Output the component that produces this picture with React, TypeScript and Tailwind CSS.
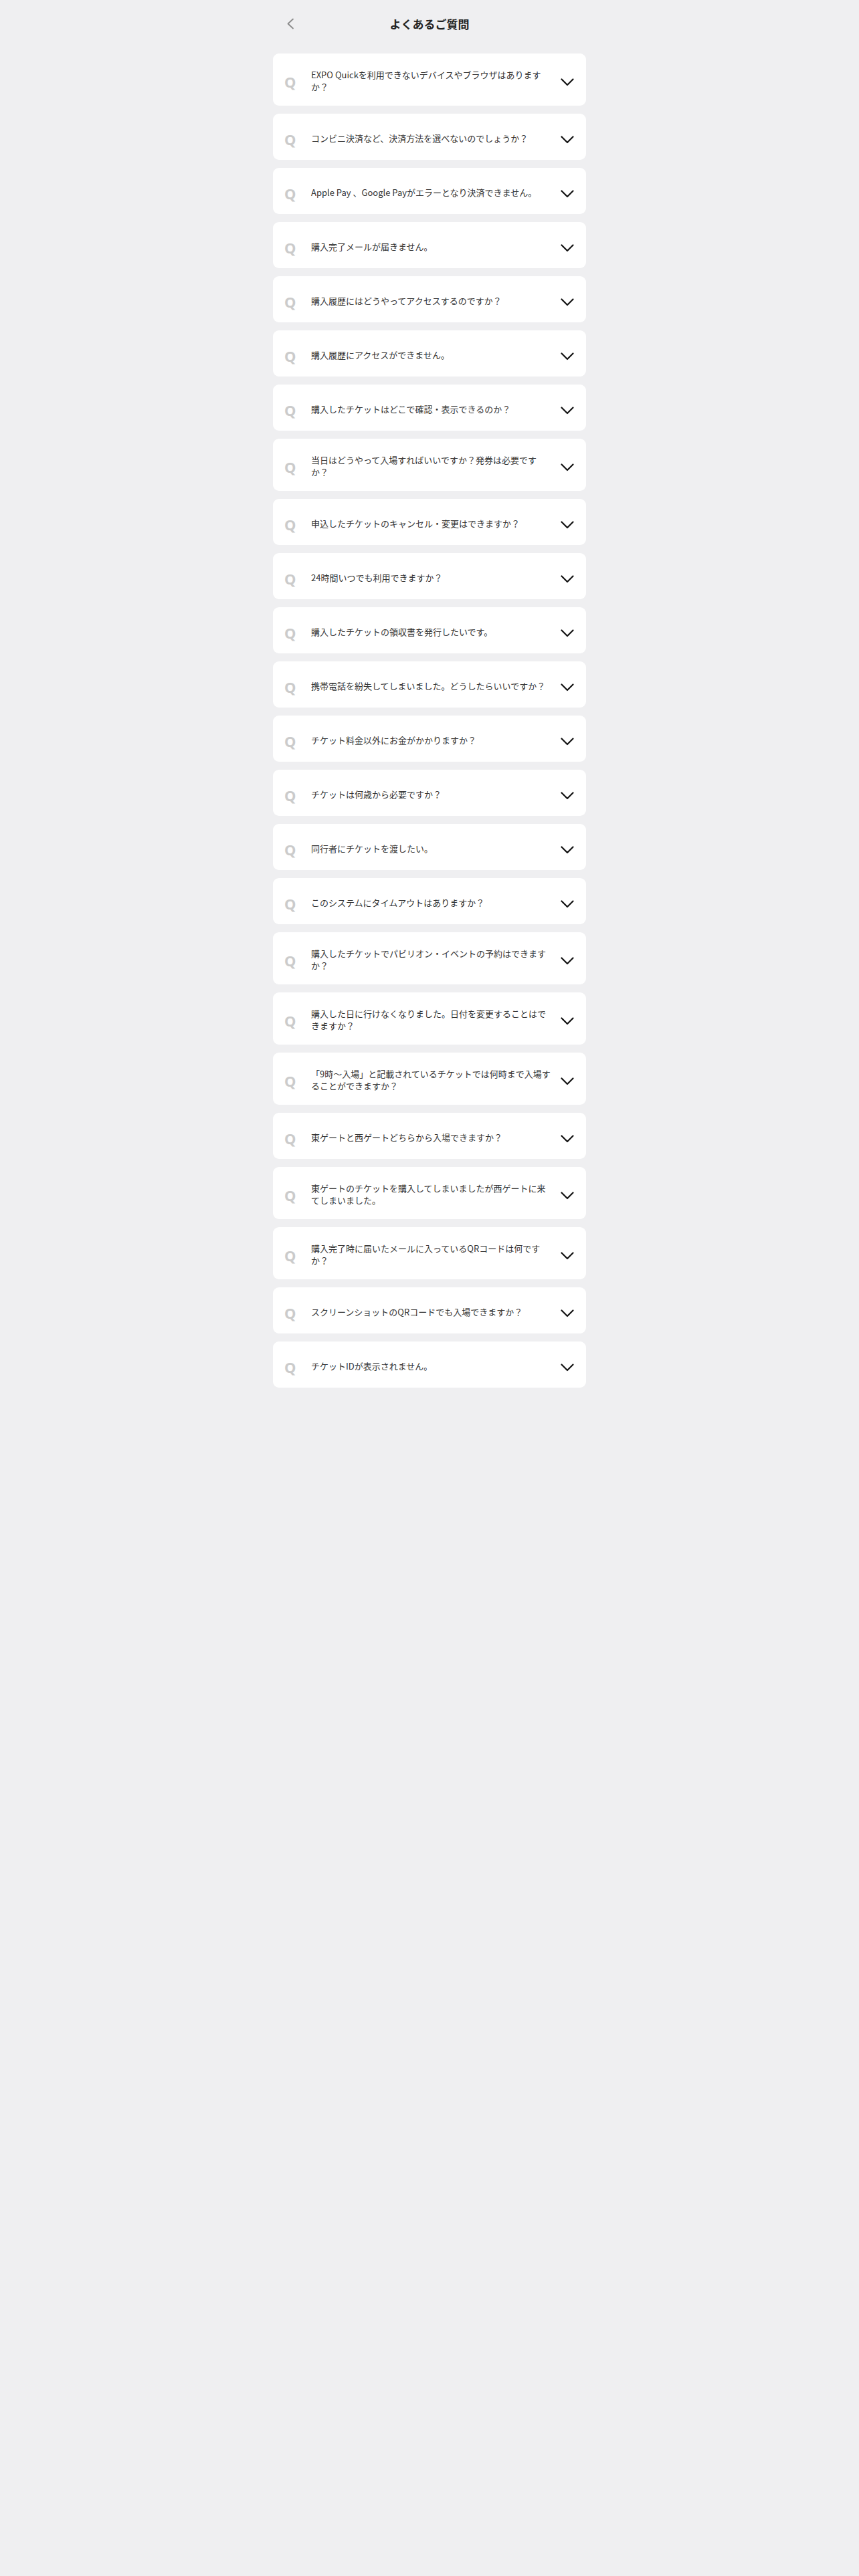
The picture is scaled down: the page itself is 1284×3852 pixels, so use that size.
const faqs = [
    "EXPO Quickを利用できないデバイスやブラウザはありますか？",
    "コンビニ決済など、決済方法を選べないのでしょうか？",
    "Apple Pay 、Google Payがエラーとなり決済できません。",
    "購入完了メールが届きません。",
    "購入履歴にはどうやってアクセスするのですか？",
    "購入履歴にアクセスができません。",
    "購入したチケットはどこで確認・表示できるのか？",
    "当日はどうやって入場すればいいですか？発券は必要ですか？",
    "申込したチケットのキャンセル・変更はできますか？",
    "24時間いつでも利用できますか？",
    "購入したチケットの領収書を発行したいです。",
    "携帯電話を紛失してしまいました。どうしたらいいですか？",
    "チケット料金以外にお金がかかりますか？",
    "チケットは何歳から必要ですか？",
    "同行者にチケットを渡したい。",
    "このシステムにタイムアウトはありますか？",
    "購入したチケットでパビリオン・イベントの予約はできますか？",
    "購入した日に行けなくなりました。日付を変更することはできますか？",
    "「9時〜入場」と記載されているチケットでは何時まで入場することができますか？",
    "東ゲートと西ゲートどちらから入場できますか？",
    "東ゲートのチケットを購入してしまいましたが西ゲートに来てしまいました。",
    "購入完了時に届いたメールに入っているQRコードは何ですか？",
    "スクリーンショットのQRコードでも入場できますか？",
    "チケットIDが表示されません。",
];

const ChevronDown = () => (
    <svg width="20" height="12" viewBox="0 0 20 12" fill="none">
        <polyline points="1.5,1.5 10,10 18.5,1.5" stroke="#111" strokeWidth="2.2" strokeLinecap="round" strokeLinejoin="round" />
    </svg>
);

const BackIcon = () => (
    <svg width="12" height="17" viewBox="0 0 12 17" fill="none">
        <polyline points="10,1.5 2.5,8.5 10,15.5" stroke="#8a8a8a" strokeWidth="1.8" strokeLinecap="round" strokeLinejoin="round" />
    </svg>
);

const FaqItem = ({ text }: { text: string }) => (
    <div className="bg-white rounded-[9px] pt-[23px] pb-[19px] pl-[17px] pr-[18px]">
        <div className="flex items-center min-h-[27px]">
            <span className="w-[40px] shrink-0 text-[22px] font-bold leading-none text-[#cbcbcb] font-['Noto_Sans','Noto_Sans_CJK_JP',sans-serif] pt-[2px]">
                Q
            </span>
            <p className="w-[360px] text-[13px] leading-[18px] text-[#333333]">{text}</p>
            <div className="ml-auto flex items-center pt-[4px]">
                <ChevronDown />
            </div>
        </div>
    </div>
);

export default function App() {
    return (
        <div lang="ja" className="min-h-[3852px] bg-[#efeff1] font-['Noto_Sans_CJK_JP','Noto_Sans',sans-serif]">
            <div className="w-[468px] mx-auto">
                <header className="relative h-[72px] flex items-center justify-center">
                    <button className="absolute left-[20px] top-[27px]">
                        <BackIcon />
                    </button>
                    <h1 className="text-[17px] font-bold text-[#222222]">よくあるご質問</h1>
                </header>

                <div className="pt-[8px] flex flex-col gap-[12px]">
                    {faqs.map((q) => (
                        <FaqItem key={q} text={q} />
                    ))}
                </div>
            </div>
        </div>
    );
}
